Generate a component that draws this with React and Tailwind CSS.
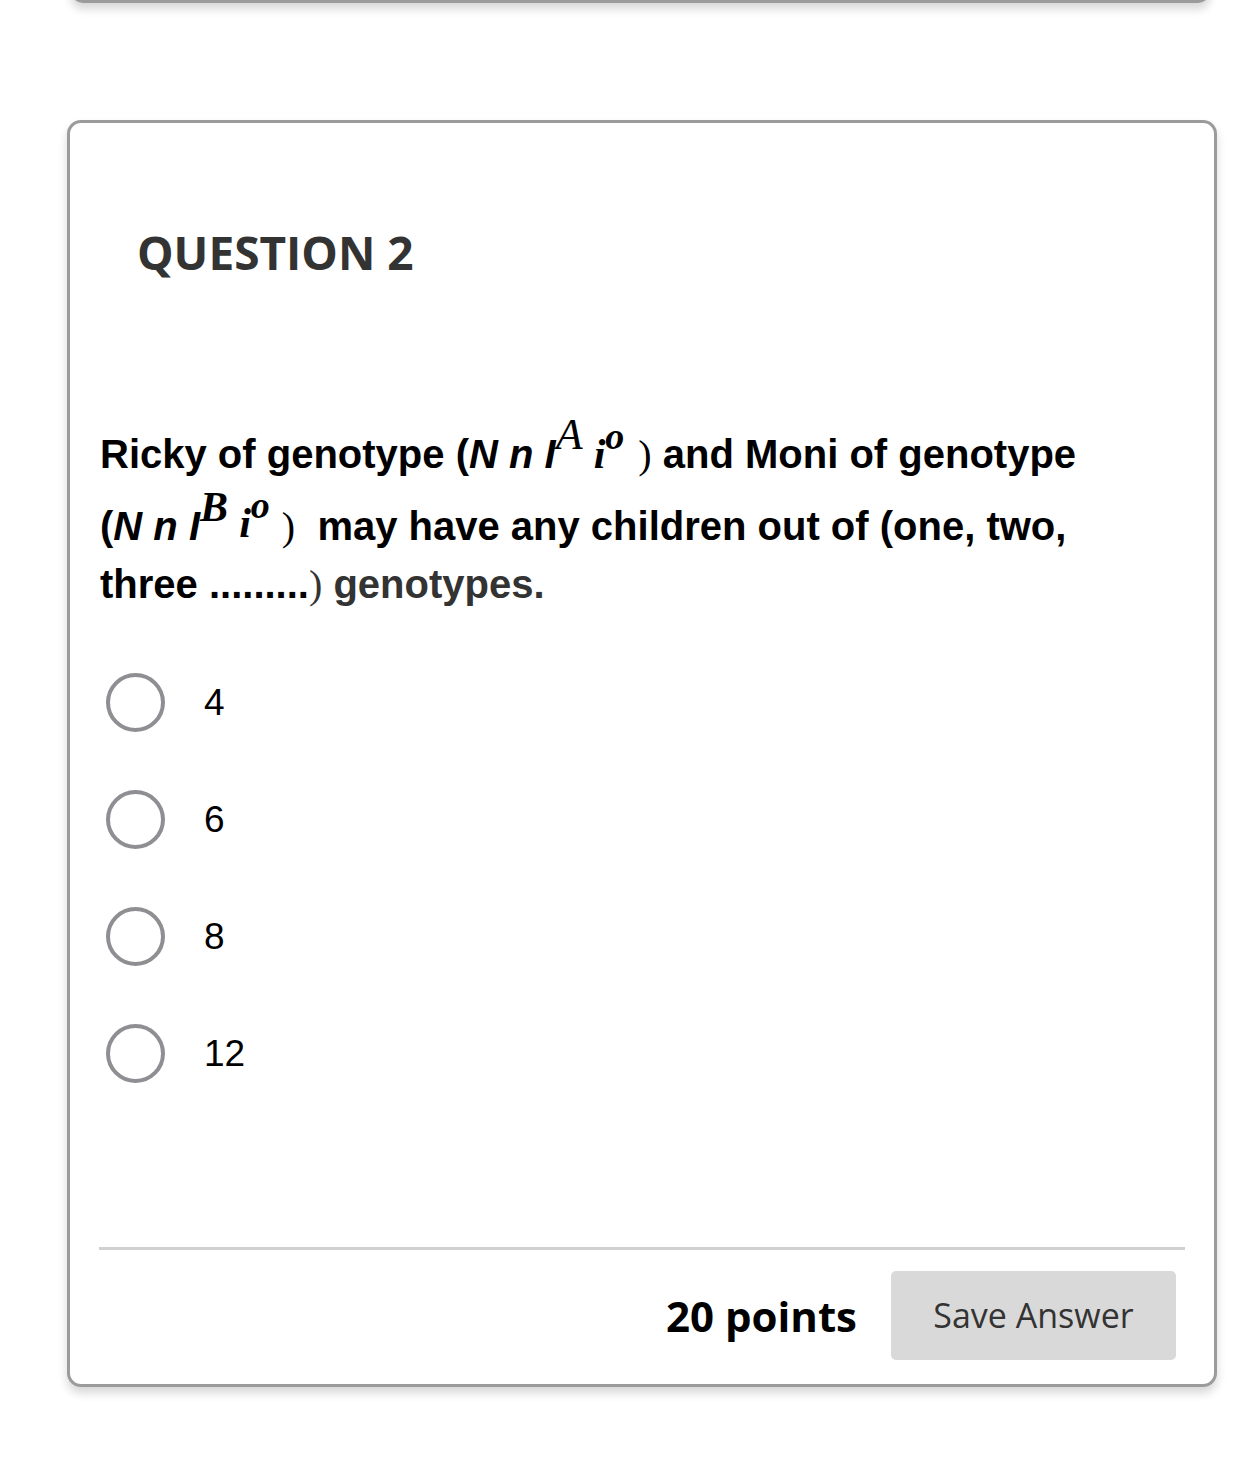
export default function App() {
  const arial = "font-['Liberation_Sans',Arial,sans-serif]";
  const times = "font-['Liberation_Serif','Times_New_Roman',serif]";
  const open = "font-['Open_Sans','Noto_Sans',sans-serif]";
  const options = ["4", "6", "8", "12"];
  return (
    <div className="min-h-[1482px] bg-white overflow-hidden">
      <div className="ml-[71px] mr-[30px] -mt-[40px] h-[43px] rounded-b-[12px] border-x-[3px] border-b-[3px] border-[#9b9b9b] bg-white shadow-[0_6px_10px_rgba(0,0,0,0.16)]" />
      <div className="ml-[67px] mr-[23px] mt-[117px] flex h-[1267px] flex-col rounded-[14px] border-[3px] border-[#9b9b9b] bg-white shadow-[0_6px_10px_rgba(0,0,0,0.16)]">
        <h2 className={`${open} ml-[67px] mt-[99px] text-[46px] font-bold leading-[60px] text-[#333]`}>
          QUESTION 2
        </h2>

        <div className={`${arial} ml-[30px] mt-[143px] text-[40px] font-bold leading-[58px] text-black whitespace-nowrap`}>
          <div>
            Ricky of genotype (<span className="italic">N n I</span>
            <span className={`${times} relative -top-[19px] text-[44px] leading-none italic font-normal`}>A</span>{" "}
            <span className={`${times} text-[42px] leading-none italic`}>i</span>
            <span className={`${times} relative -top-[19px] text-[38px] leading-none italic`}>o</span>
            <span className={`${times} ml-[14px] font-normal leading-none`}>)</span> and Moni of genotype
          </div>
          <div className="mt-[14px]">
            (<span className="italic">N n I</span>
            <span className={`${times} relative -top-[19px] text-[42px] leading-none italic`}>B</span>{" "}
            <span className={`${times} relative -top-[3px] text-[42px] leading-none italic`}>i</span>
            <span className={`${times} relative -top-[22px] text-[38px] leading-none italic`}>o</span>
            <span className={`${times} ml-[12px] font-normal leading-none`}>)</span>
            {"\u00a0 "}may have any children out of (one, two,
          </div>
          <div>
            three .........<span className="text-[#333]">
              <span className={`${times} font-normal leading-none`}>)</span> genotypes.
            </span>
          </div>
        </div>

        <div className="mt-[60px] ml-[36px] flex flex-col gap-[58px]">
          {options.map((o) => (
            <label key={o} className="flex h-[59px] items-center">
              <span className="h-[59px] w-[59px] rounded-full border-[4px] border-[#8e8e93] bg-white" />
              <span className={`${arial} ml-[39px] text-[37px] leading-none text-black`}>{o}</span>
            </label>
          ))}
        </div>

        <div className="mt-auto ml-[29px] mr-[29px] h-[3px] bg-[#d0d0d0]" />
        <div className="mb-[24px] mr-[38px] mt-[21px] flex items-center justify-end">
          <span className={`${open} mr-[34px] text-[42px] font-bold leading-none text-black`}>20 points</span>
          <button className={`${open} h-[89px] w-[285px] rounded-[5px] bg-[#d9d9d9] text-[34px] text-[#333]`}>
            Save Answer
          </button>
        </div>
      </div>
    </div>
  );
}
